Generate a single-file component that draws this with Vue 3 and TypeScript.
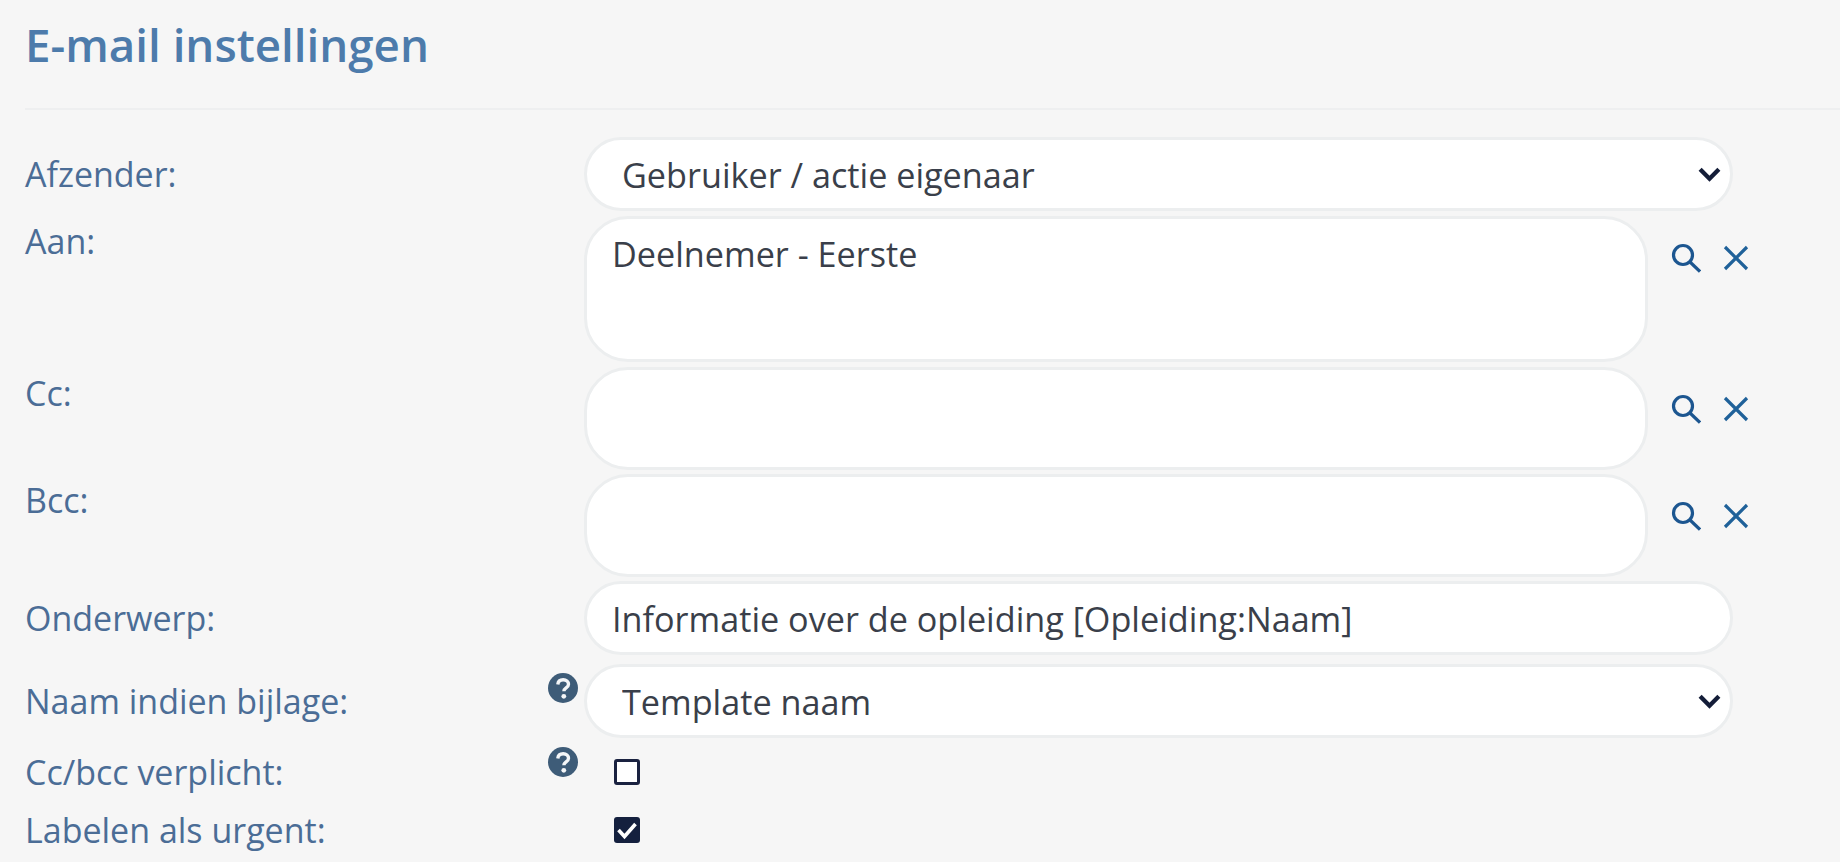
<script setup lang="ts">
interface Row {
  label: string
  kind: 'select' | 'input' | 'area' | 'check'
  value?: string
  size?: string
  checked?: boolean
  help?: boolean
  tools?: boolean
}
const rows: Row[] = [
  { label: 'Afzender:', kind: 'select', value: 'Gebruiker / actie eigenaar', size: 'r1' },
  { label: 'Aan:', kind: 'area', value: 'Deelnemer - Eerste', size: 'r2', tools: true },
  { label: 'Cc:', kind: 'area', value: '', size: 'r3', tools: true },
  { label: 'Bcc:', kind: 'area', value: '', size: 'r4', tools: true },
  { label: 'Onderwerp:', kind: 'input', value: 'Informatie over de opleiding [Opleiding:Naam]', size: 'r5' },
  { label: 'Naam indien bijlage:', kind: 'select', value: 'Template naam', size: 'r6', help: true },
  { label: 'Cc/bcc verplicht:', kind: 'check', checked: false, size: 'r7', help: true },
  { label: 'Labelen als urgent:', kind: 'check', checked: true, size: 'r8' },
]
</script>

<template>
  <main class="page">
    <h2 class="title">E-mail instellingen</h2>
    <div class="form">
      <div v-for="r in rows" :key="r.label" class="row" :class="[r.size, 'k-' + r.kind]">
        <label class="label">{{ r.label }}</label>
        <div class="help-cell">
          <svg v-if="r.help" class="help" viewBox="0 0 32 32">
            <circle cx="16" cy="16" r="15" fill="#3e5c78" />
            <path d="M10.800 12.500c.3-3.200 2.600-4.800 5.400-4.800 3 0 5.300 1.800 5.300 4.500 0 3.800-4.600 3.600-4.600 7" fill="none" stroke="#f4f6f8" stroke-width="3.400" />
            <circle cx="16.800" cy="24.300" r="2.400" fill="#f4f6f8" />
          </svg>
        </div>
        <div class="control">
          <div v-if="r.kind === 'select'" class="select-wrap">
            <select class="field select">
              <option>{{ r.value }}</option>
            </select>
            <svg class="chev" viewBox="0 0 24 15">
              <path d="M3 3l9 9 9-9" fill="none" stroke="#141d38" stroke-width="4.200" />
            </svg>
          </div>
          <input v-else-if="r.kind === 'input'" class="field input" :value="r.value" />
          <template v-else-if="r.kind === 'area'">
            <textarea class="field area" rows="1" :value="r.value"></textarea>
            <div class="tools">
              <svg class="search" viewBox="0 0 30 30">
                <circle cx="12" cy="12" r="9.500" fill="none" stroke="#1c5690" stroke-width="3.200" />
                <path d="M19 19L29 28.500" fill="none" stroke="#1c5690" stroke-width="3.200" />
              </svg>
              <svg class="close" viewBox="0 0 26 26">
                <path d="M2 2l22 22M24 2L2 24" fill="none" stroke="#1f6199" stroke-width="3.200" />
              </svg>
            </div>
          </template>
          <span v-else class="check" :class="{ on: r.checked }">
            <svg v-if="r.checked" viewBox="0 0 26 26">
              <path d="M4.500 13l6 6.500L21.500 7" fill="none" stroke="#fff" stroke-width="3.600" />
            </svg>
          </span>
        </div>
      </div>
    </div>
  </main>
</template>

<style>
html, body { background: #f6f6f6; }
</style>

<style scoped>
.page {
  box-sizing: border-box;
  height: 862px;
  padding: 0 0 0 25px;
  overflow: hidden;
  background: #f6f6f6;
  font-family: "Open Sans", sans-serif;
}
.title {
  box-sizing: border-box;
  height: 110px;
  margin: 0;
  padding-top: 16px;
  border-bottom: 2px solid #eeeff0;
  font-size: 45.700px;
  line-height: 56px;
  font-weight: 600;
  color: #4d7bab;
}
.form {
  display: flex;
  flex-direction: column;
  padding-top: 27px;
}
.row {
  display: grid;
  grid-template-columns: 520px 39px 1fr;
  grid-template-rows: minmax(0, 1fr);
}
.r1 { height: 74px; margin-bottom: 5px; }
.r2 { height: 146px; margin-bottom: 5px; }
.r3 { height: 103px; margin-bottom: 4px; }
.r4 { height: 103px; margin-bottom: 4px; }
.r5 { height: 74px; margin-bottom: 9px; }
.r6 { height: 74px; margin-bottom: 4px; }
.r7 { height: 59px; }
.r8 { height: 58px; }
.label {
  align-self: center;
  font-size: 34px;
  line-height: 42px;
  color: #4b6d96;
}
.k-area .label {
  align-self: start;
  padding-top: 4px;
}
.r3 .label, .r4 .label { padding-top: 5px; }
.help-cell { position: relative; }
.help {
  position: absolute;
  left: 2px;
  top: 8px;
  width: 32px;
  height: 32px;
}
.k-check .help { top: 4px; }
.control {
  display: flex;
  align-items: stretch;
  min-width: 0;
  min-height: 0;
}
.k-check .control { align-items: center; }
.select-wrap {
  position: relative;
  width: 1149px;
  height: 100%;
}
.field {
  box-sizing: border-box;
  display: block;
  margin: 0;
  background: #fff;
  border: 3px solid #eceeef;
  outline: none;
  font-family: inherit;
  font-size: 34.200px;
  color: #3a3f4a;
}
.select {
  appearance: none;
  width: 100%;
  height: 100%;
  border-radius: 37px;
  padding: 0 0 0 35px;
}
.chev {
  position: absolute;
  right: 11px;
  top: 29px;
  width: 25px;
  height: 16px;
}
.input {
  width: 1149px;
  height: 100%;
  border-radius: 37px;
  padding: 0 25px;
}
.area {
  width: 1064px;
  height: 100%;
  border-radius: 44px;
  padding: 14px 25px;
  line-height: 42px;
  resize: none;
  overflow: hidden;
}
.tools {
  display: flex;
  align-items: center;
  align-self: flex-start;
  gap: 22px;
  margin: 27px 0 0 23px;
}
.search { width: 30px; height: 30px; }
.close { width: 26px; height: 26px; }
.check {
  box-sizing: border-box;
  display: block;
  width: 26px;
  height: 26px;
  margin-left: 30px;
  border: 3px solid #1a2240;
  border-radius: 3px;
  background: #fff;
}
.check.on {
  border: 0;
  background: #14203e;
}
.check svg { display: block; width: 26px; height: 26px; }
</style>
